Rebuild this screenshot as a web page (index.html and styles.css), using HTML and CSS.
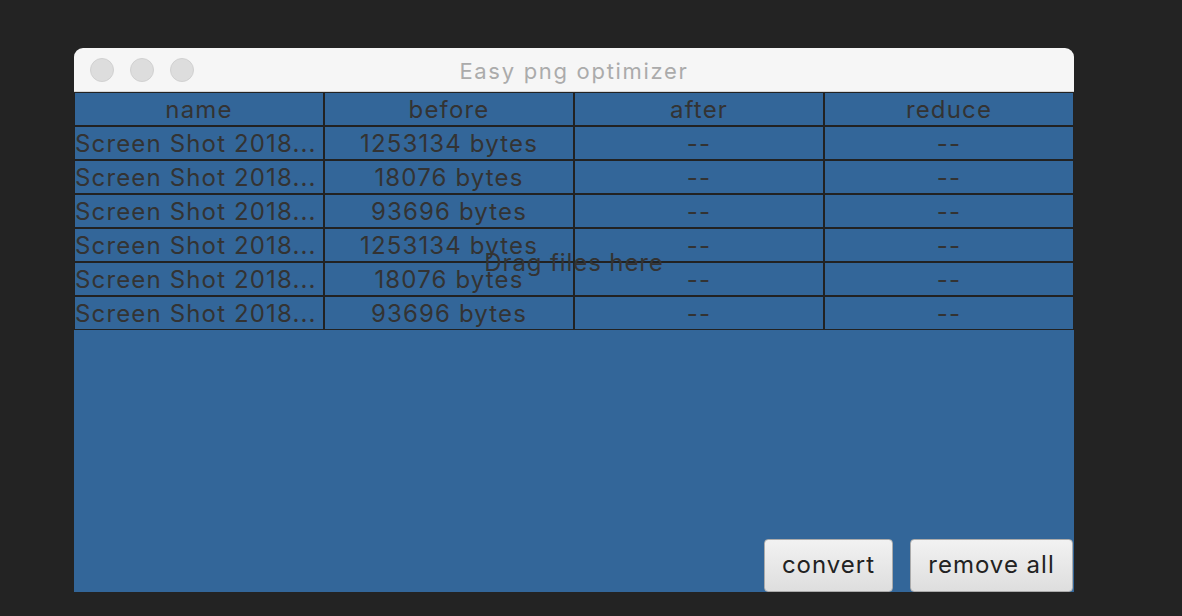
FILE: index.html
```html
<!DOCTYPE html>
<html>
<head>
<meta charset="utf-8">
<link rel="stylesheet" href="styles.css">
</head>
<body>
<div class="window">
  <div class="titlebar">
    <div class="lights">
      <span class="light"></span><span class="light"></span><span class="light"></span>
    </div>
    <div class="title">Easy png optimizer</div>
  </div>
  <div class="content">
    <div class="table">
      <div class="cell head">name</div>
      <div class="cell head">before</div>
      <div class="cell head">after</div>
      <div class="cell head">reduce</div>

      <div class="cell name">Screen Shot 2018...</div>
      <div class="cell">1253134 bytes</div>
      <div class="cell">--</div>
      <div class="cell">--</div>

      <div class="cell name">Screen Shot 2018...</div>
      <div class="cell">18076 bytes</div>
      <div class="cell">--</div>
      <div class="cell">--</div>

      <div class="cell name">Screen Shot 2018...</div>
      <div class="cell">93696 bytes</div>
      <div class="cell">--</div>
      <div class="cell">--</div>

      <div class="cell name">Screen Shot 2018...</div>
      <div class="cell">1253134 bytes</div>
      <div class="cell">--</div>
      <div class="cell">--</div>

      <div class="cell name">Screen Shot 2018...</div>
      <div class="cell">18076 bytes</div>
      <div class="cell">--</div>
      <div class="cell">--</div>

      <div class="cell name">Screen Shot 2018...</div>
      <div class="cell">93696 bytes</div>
      <div class="cell">--</div>
      <div class="cell">--</div>
    </div>
    <div class="drag">Drag files here</div>
    <div class="actions">
      <button class="btn btn-convert">convert</button>
      <button class="btn btn-remove">remove all</button>
    </div>
  </div>
</div>
</body>
</html>
```
FILE: styles.css
```css
html, body {
  margin: 0;
  padding: 0;
  background: #232323;
  width: 1182px;
  height: 616px;
  overflow: hidden;
}
body {
  padding: 48px 0 0 74px;
  box-sizing: border-box;
  font-family: Inter, "DejaVu Sans", sans-serif;
}
.window {
  width: 1000px;
  height: 544px;
  display: flex;
  flex-direction: column;
}
.titlebar {
  height: 44px;
  box-sizing: border-box;
  background: #f6f6f6;
  border-bottom: 1px solid #d6d6d6;
  border-radius: 9px 9px 0 0;
  position: relative;
  display: flex;
  align-items: center;
  justify-content: center;
}
.lights {
  position: absolute;
  left: 16px;
  top: 10px;
  display: flex;
  gap: 16px;
}
.light {
  width: 24px;
  height: 24px;
  box-sizing: border-box;
  border-radius: 50%;
  background: #dddddd;
  border: 1px solid #d1d1d1;
}
.title {
  color: #ababab;
  font-size: 22px;
  letter-spacing: 1.7px;
  margin-top: 2px;
}
.content {
  flex: 1;
  background: #336699;
  position: relative;
  display: flex;
  flex-direction: column;
}
.table {
  display: grid;
  grid-template-columns: repeat(4, 250px);
  grid-auto-rows: 34px;
}
.cell {
  border: 1px solid #222222;
  box-sizing: border-box;
  color: #333333;
  font-size: 24px;
  letter-spacing: 1.15px;
  line-height: 33px;
  text-align: center;
  white-space: nowrap;
  overflow: hidden;
}
.cell.name {
  text-align: left;
}
.drag {
  position: absolute;
  left: 0;
  right: 0;
  top: 155px;
  text-align: center;
  color: #333333;
  font-size: 24px;
  letter-spacing: 0.9px;
  line-height: 32px;
}
.actions {
  margin-top: auto;
  display: flex;
  justify-content: flex-end;
  gap: 17px;
  padding-right: 1px;
}
.btn {
  height: 53px;
  box-sizing: border-box;
  border: 1px solid #ababab;
  border-radius: 4px;
  background: linear-gradient(#f2f2f2, #dedede);
  color: #222222;
  font-family: Inter, "DejaVu Sans", sans-serif;
  font-size: 24px;
  letter-spacing: 1px;
  padding: 0 0 2px 0;
}
.btn-convert { width: 129px; }
.btn-remove { width: 163px; }
```
